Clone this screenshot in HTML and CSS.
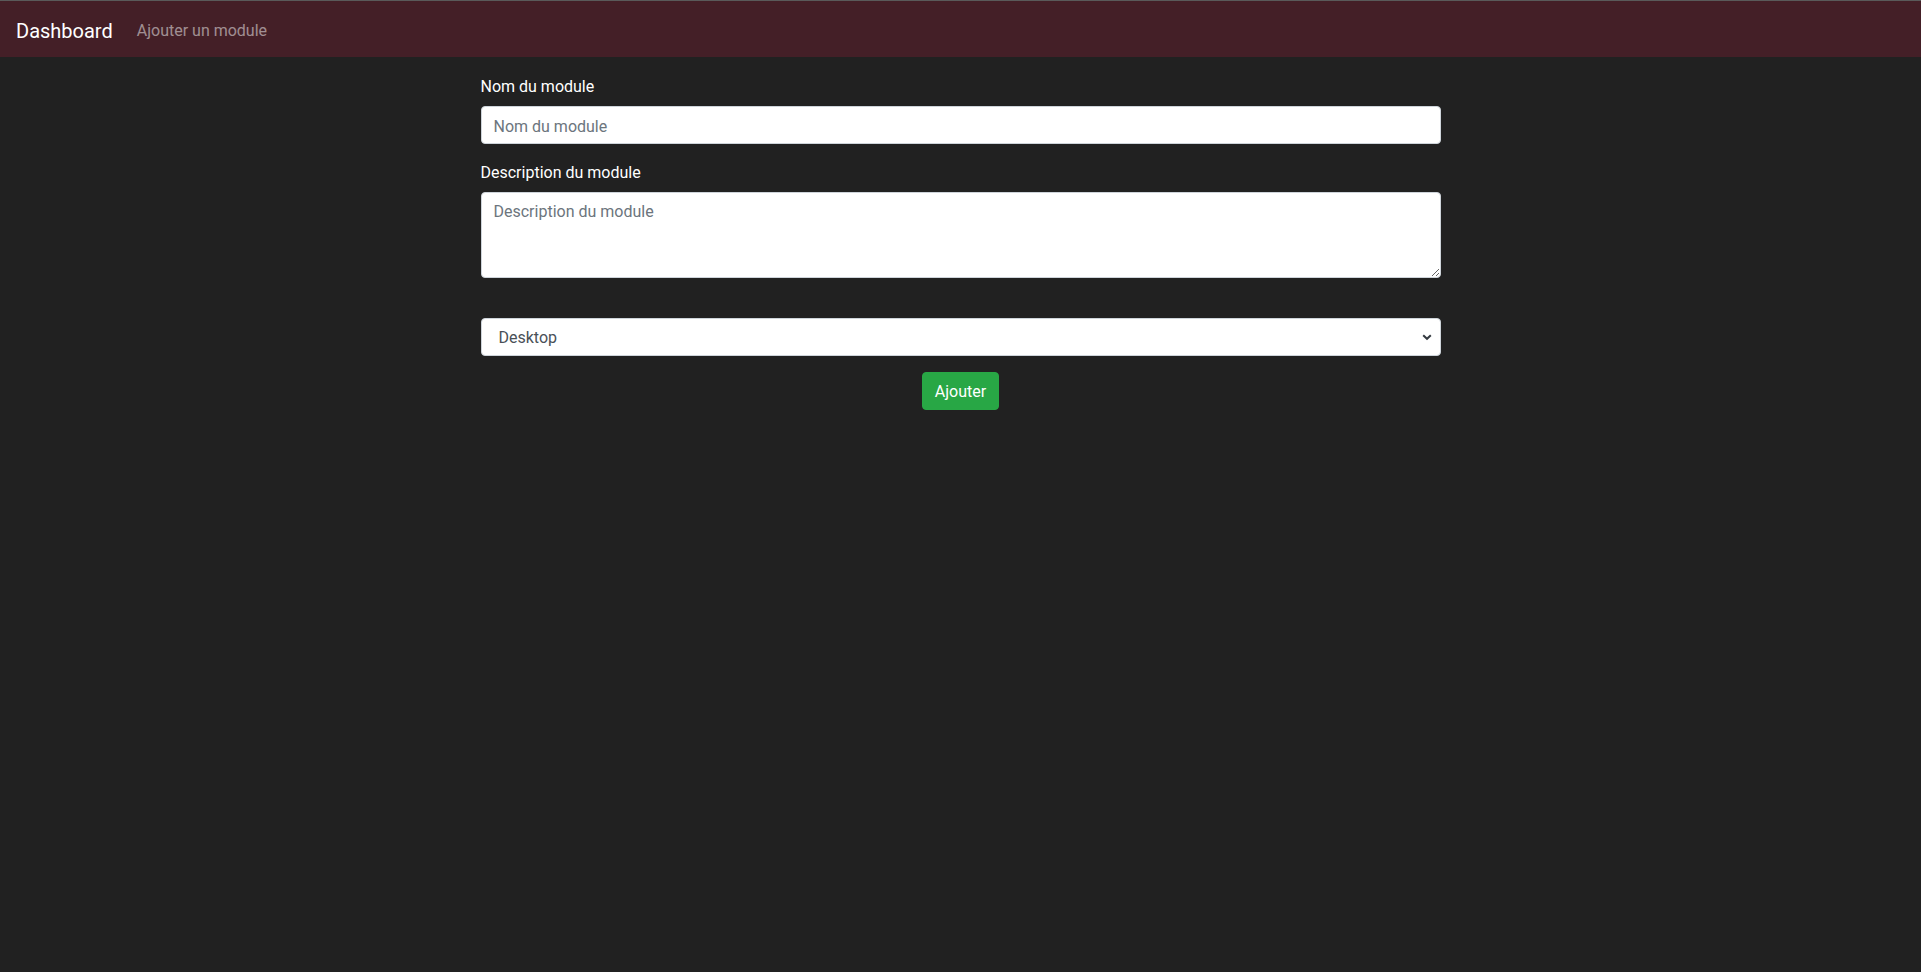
FILE: index.html
```html
<!DOCTYPE html>
<html lang="fr">
<head>
<meta charset="utf-8">
<title>Ajouter un module</title>
<link rel="stylesheet" href="styles.css">
</head>
<body>
<div class="topline"></div>
<nav class="navbar">
  <a class="brand" href="#">Dashboard</a>
  <a class="nav-link" href="#">Ajouter un module</a>
</nav>
<main class="container">
  <form class="form">
    <div class="group">
      <label class="label" for="nom">Nom du module</label>
      <input class="control" id="nom" type="text" placeholder="Nom du module">
    </div>
    <div class="group">
      <label class="label" for="desc">Description du module</label>
      <textarea class="control area" id="desc" rows="3" placeholder="Description du module"></textarea>
    </div>
    <div class="group">
      <div class="spacer"></div>
      <div class="select-wrap">
        <select class="control select">
          <option>Desktop</option>
          <option>Mobile</option>
        </select>
        <svg class="chevron" width="10" height="8" viewBox="0 0 10 8"><path d="M1.2 2.2 L5 5.8 L8.8 2.2" fill="none" stroke="#343a40" stroke-width="2"/></svg>
      </div>
    </div>
    <div class="actions">
      <button class="btn" type="button">Ajouter</button>
    </div>
  </form>
</main>
</body>
</html>
```
FILE: styles.css
```css
html, body {
  margin: 0;
  padding: 0;
}
body {
  background: #212121;
  font-family: Roboto, "Open Sans", sans-serif;
  font-size: 16px;
  line-height: 24px;
  color: #fff;
  height: 972px;
  overflow: hidden;
}
.topline {
  height: 1px;
  background: #5a5a5a;
}
.navbar {
  height: 56px;
  box-sizing: border-box;
  background: #441f27;
  display: flex;
  align-items: center;
  padding: 4px 16px 0;
}
.brand {
  color: #fff;
  text-decoration: none;
  font-size: 20px;
  line-height: 30px;
  margin-right: 16px;
}
.nav-link {
  color: rgba(255, 255, 255, 0.5);
  text-decoration: none;
  padding: 0 8px;
  font-size: 16px;
}
.container {
  width: 960px;
  margin: 17px auto 0;
}
.group {
  margin-bottom: 16px;
}
.label {
  display: block;
  padding-top: 1px;
  margin-bottom: 7px;
  line-height: 24px;
  color: #fff;
}
.spacer {
  height: 24px;
}
.control {
  display: block;
  width: 100%;
  box-sizing: border-box;
  height: 38px;
  padding: 7px 12px 5px;
  font-family: inherit;
  font-size: 16px;
  line-height: 24px;
  color: #495057;
  background: #fff;
  border: 1px solid #ced4da;
  border-radius: 4px;
  margin: 0;
}
.control::placeholder {
  color: #6c757d;
}
.area {
  height: 86px;
  resize: vertical;
}
.select-wrap {
  position: relative;
}
.select {
  appearance: none;
  -webkit-appearance: none;
  padding-left: 17px;
}
.chevron {
  position: absolute;
  right: 9px;
  top: 15px;
  pointer-events: none;
}
.actions {
  display: flex;
  justify-content: center;
}
.btn {
  height: 38px;
  padding: 7px 12px 5px;
  font-family: inherit;
  font-size: 16px;
  line-height: 24px;
  color: #fff;
  background: #28a745;
  border: 1px solid #28a745;
  border-radius: 4px;
}
```
